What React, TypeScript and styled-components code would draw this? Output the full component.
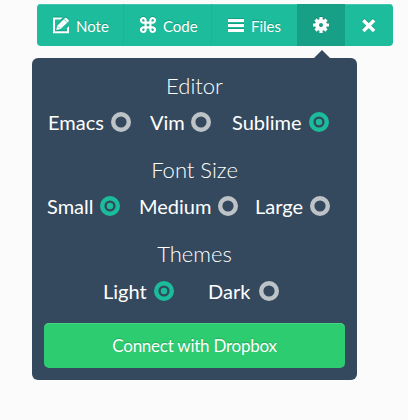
import React from "react";
import styled, { createGlobalStyle } from "styled-components";

const Global = createGlobalStyle`
  * { box-sizing: border-box; }
  body { margin: 0; background: #fbfbfb; font-family: Lato, sans-serif; color: #fff; }
`;

const Page = styled.main`
  width: 408px;
  height: 420px;
  padding: 4px 0 0 32px;
  overflow: hidden;
`;

const Toolbar = styled.nav`
  display: flex;
  width: 356px;
  height: 42px;
  margin-left: 5px;
  border-radius: 4px;
  overflow: hidden;
`;

const Tool = styled.button<{ $width: number; $active?: boolean; $last?: boolean }>`
  display: flex;
  align-items: center;
  flex: none;
  width: ${(p) => p.$width}px;
  padding: 0 0 0 16px;
  border: 0;
  border-right: ${(p) => (p.$active || p.$last ? "0" : "1px solid #1bb497")};
  background: ${(p) => (p.$active ? "#17a086" : "#1dbc9c")};
  box-shadow: ${(p) => (p.$active ? "none" : "inset 0 1px #42c8ae")};
  color: #fff;
  font: 400 15px/20px Lato, sans-serif;
  text-shadow: 0 -1px 1px rgba(0, 80, 60, 0.3);
`;

const ToolIcon = styled.svg`
  flex: none;
  width: 16px;
  height: 16px;
  overflow: visible;
  filter: drop-shadow(0 -1px 0 rgba(0, 90, 70, 0.3));
`;

const ToolLabel = styled.span`
  margin: 1px 0 0 7px;
`;

const Panel = styled.section`
  position: relative;
  display: flex;
  flex-direction: column;
  width: 325px;
  height: 322px;
  margin-top: 12px;
  padding: 12px 12px 0;
  border-radius: 6px;
  background: #34495e;
  &::before {
    content: "";
    position: absolute;
    top: -8px;
    left: 281px;
    border: solid transparent;
    border-width: 0 9px 9px;
    border-bottom-color: #34495e;
  }
`;

const Group = styled.div`
  height: 84px;
`;

const Heading = styled.h2`
  height: 32px;
  margin: 0;
  font-size: 22px;
  font-weight: 300;
  line-height: 32px;
  text-align: center;
`;

const Options = styled.div`
  display: flex;
  height: 40px;
  ${Group}:nth-child(3) & { height: 42px; }
`;

const Option = styled.label<{ $before: number; $width: number }>`
  display: flex;
  flex: none;
  align-items: center;
  justify-content: space-between;
  width: ${(p) => p.$width}px;
  margin-left: ${(p) => p.$before}px;
  font-size: 20px;
  line-height: 40px;
`;

const Ring = styled.svg<{ $on?: boolean }>`
  flex: none;
  width: 20px;
  height: 20px;
  color: ${(p) => (p.$on ? "#1abc9c" : "#bdc3c7")};
`;

const Connect = styled.button`
  height: 45px;
  margin-top: 1px;
  padding: 0;
  border: 0;
  border-radius: 5px;
  background: #2ecc71;
  box-shadow: inset 0 1px #45d781;
  color: #fff;
  font: 400 17px/43px Lato, sans-serif;
  letter-spacing: -0.25px;
  text-shadow: 0 -1px 1px rgba(0, 90, 40, 0.3);
`;

type Choice = { label: string; before: number; width: number; on?: boolean };

const groups: { title: string; choices: Choice[] }[] = [
  {
    title: "Editor",
    choices: [
      { label: "Emacs", before: 4, width: 83 },
      { label: "Vim", before: 19, width: 61 },
      { label: "Sublime", before: 21, width: 97, on: true },
    ],
  },
  {
    title: "Font Size",
    choices: [
      { label: "Small", before: 3, width: 73, on: true },
      { label: "Medium", before: 19, width: 99 },
      { label: "Large", before: 17, width: 75 },
    ],
  },
  {
    title: "Themes",
    choices: [
      { label: "Light", before: 59, width: 71, on: true },
      { label: "Dark", before: 34, width: 71 },
    ],
  },
];

const EditIcon = () => (
  <ToolIcon viewBox="0 0 16 16" fill="currentColor">
    <path d="M0 .5h9.5l-2 2H2v11.8h12v-3.3l2-2v7.3H0z" />
    <path d="M3.2 13l1-4.2L12 1a1.1 1.1 0 0 1 1.5 0l2 2a1.1 1.1 0 0 1 0 1.5L7.5 12z" />
    <path d="M4.8 9.4l2.2 2.2M11 2.3l3.2 3.2" stroke="#1dbc9c" strokeWidth=".7" />
  </ToolIcon>
);

const CommandIcon = () => (
  <ToolIcon viewBox="0 0 16 16" fill="none" stroke="currentColor" strokeWidth="2.2">
    <path d="M5.6 5.6h4.8v4.8H5.6zM5.6 5.6H3.4a2.3 2.3 0 1 1 2.2-2.2zM10.4 5.6V3.4a2.3 2.3 0 1 1 2.2 2.2zM10.4 10.4h2.2a2.3 2.3 0 1 1-2.2 2.2zM5.6 10.4v2.2a2.3 2.3 0 1 1-2.2-2.2z" />
  </ToolIcon>
);

const MenuIcon = () => (
  <ToolIcon viewBox="0 0 16 16" fill="currentColor">
    <path d="M0 2h16v3H0zM0 7h16v3H0zM0 12h16v3H0z" />
  </ToolIcon>
);

const GearIcon = () => (
  <ToolIcon viewBox="0 0 16 16">
    <g stroke="currentColor" strokeWidth="3.2">
      <path d="M8 0v4M8 12v4M0 8h4M12 8h4M2.5 2.5l2.8 2.8M10.7 10.7l2.8 2.8M2.5 13.5l2.8-2.8M10.7 5.3l2.8-2.8" />
      <circle cx="8" cy="8" r="4" fill="none" strokeWidth="4" />
    </g>
  </ToolIcon>
);

const CloseIcon = () => (
  <ToolIcon viewBox="0 0 16 16" fill="none" stroke="currentColor" strokeWidth="3.4">
    <path d="M2.3 3.2l10.8 10.8M13.1 3.2L2.3 14" strokeLinecap="butt" />
  </ToolIcon>
);

export default function App() {
  return (
    <Page>
      <Global />
      <Toolbar>
        <Tool $width={87}><EditIcon /><ToolLabel>Note</ToolLabel></Tool>
        <Tool $width={88}><CommandIcon /><ToolLabel>Code</ToolLabel></Tool>
        <Tool $width={85} $last><MenuIcon /><ToolLabel>Files</ToolLabel></Tool>
        <Tool $width={48} $active aria-label="Settings"><GearIcon /></Tool>
        <Tool $width={48} $last aria-label="Close"><CloseIcon /></Tool>
      </Toolbar>
      <Panel>
        {groups.map((g) => (
          <Group key={g.title}>
            <Heading>{g.title}</Heading>
            <Options>
              {g.choices.map((c) => (
                <Option key={c.label} $before={c.before} $width={c.width}>
                  {c.label}
                  <Ring $on={c.on} viewBox="0 0 20 20">
                    <circle cx="10" cy="10" r="7.8" fill="none" stroke="currentColor" strokeWidth="4.4" />
                    {c.on && <circle cx="10" cy="10" r="3.2" fill="currentColor" />}
                  </Ring>
                </Option>
              ))}
            </Options>
          </Group>
        ))}
        <Connect>Connect with Dropbox</Connect>
      </Panel>
    </Page>
  );
}
